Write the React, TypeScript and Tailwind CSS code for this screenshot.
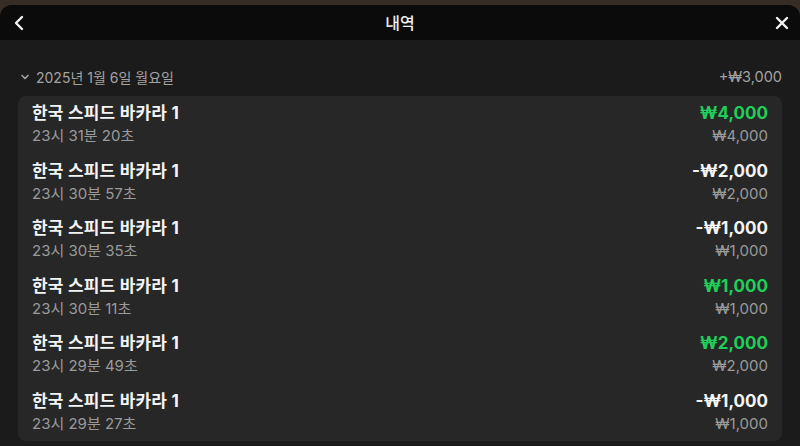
import React from 'react';

type Row = {
  time: string;
  amount: string;
  bet: string;
  win: boolean;
};

const rows: Row[] = [
  { time: '23시 31분 20초', amount: '₩4,000', bet: '₩4,000', win: true },
  { time: '23시 30분 57초', amount: '-₩2,000', bet: '₩2,000', win: false },
  { time: '23시 30분 35초', amount: '-₩1,000', bet: '₩1,000', win: false },
  { time: '23시 30분 11초', amount: '₩1,000', bet: '₩1,000', win: true },
  { time: '23시 29분 49초', amount: '₩2,000', bet: '₩2,000', win: true },
  { time: '23시 29분 27초', amount: '-₩1,000', bet: '₩1,000', win: false },
];

const font = { fontFamily: 'Inter, "Noto Sans CJK KR", sans-serif' };

export default function App() {
  return (
    <div className="w-[800px] h-[446px] overflow-hidden bg-[#362d27] pt-[5px]" style={font}>
      <div className="h-full rounded-t-[12px] bg-[#1b1b1b] overflow-hidden">
        <div className="h-[35px] bg-[#0b0b0b] flex items-center justify-between pl-[12px] pr-[10px]">
          <svg width="14" height="16" viewBox="0 0 14 16" fill="none">
            <path d="M10 2 L4 8 L10 14" stroke="#f2f2f2" strokeWidth="2.4" strokeLinecap="round" strokeLinejoin="round" />
          </svg>
          <span className="text-[16px] font-medium text-[#f0f0f0] leading-none">내역</span>
          <svg width="16" height="16" viewBox="0 0 16 16" fill="none">
            <path d="M3 3 L13 13 M13 3 L3 13" stroke="#f2f2f2" strokeWidth="2.4" strokeLinecap="round" />
          </svg>
        </div>

        <div className="px-[18px]">
          <div className="mt-[26px] h-[22px] flex items-center justify-between text-[14px] text-[#a3a3a3]">
            <div className="flex items-center gap-[6px] pl-[2px]">
              <svg width="10" height="8" viewBox="0 0 10 8" fill="none">
                <path d="M2 2.5 L5 5.5 L8 2.5" stroke="#a3a3a3" strokeWidth="1.6" strokeLinecap="round" strokeLinejoin="round" />
              </svg>
              <span>2025년 1월 6일 월요일</span>
            </div>
            <span className="text-[14.5px]">+₩3,000</span>
          </div>

          <div className="mt-[8px] rounded-[8px] bg-[#272727] px-[14px]">
            {rows.map((r, i) => (
              <div key={i} className="h-[57.5px] pt-[5px] flex justify-between">
                <div className="flex flex-col">
                  <span className="h-[24px] leading-[24px] text-[17px] tracking-[0.2px] font-bold text-[#f4f4f4]">한국 스피드 바카라 1</span>
                  <span className="h-[22px] leading-[22px] text-[15px] text-[#9a9a9a]">{r.time}</span>
                </div>
                <div className="flex flex-col items-end">
                  <span className={`h-[24px] leading-[24px] text-[17px] font-bold ${r.win ? 'text-[#1fcf5a]' : 'text-[#f4f4f4]'}`}>{r.amount}</span>
                  <span className="h-[22px] leading-[22px] text-[15px] text-[#9a9a9a]">{r.bet}</span>
                </div>
              </div>
            ))}
          </div>
        </div>
      </div>
    </div>
  );
}
